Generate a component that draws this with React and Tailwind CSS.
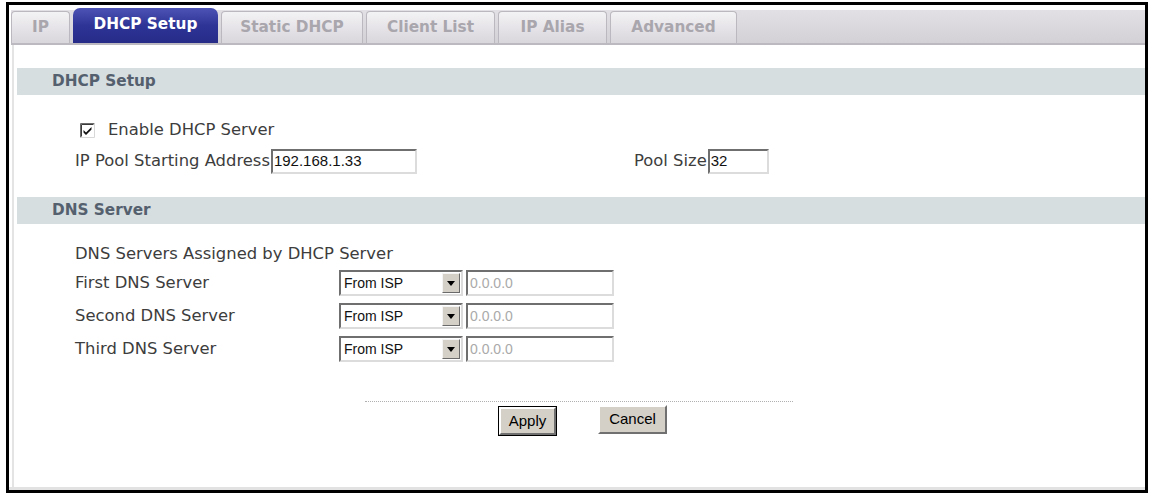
import React from 'react';

const tabs = [
    { label: 'IP', width: 'w-[59px]' },
    { label: 'DHCP Setup', width: 'w-[145px]', active: true },
    { label: 'Static DHCP', width: 'w-[142px]' },
    { label: 'Client List', width: 'w-[129px]' },
    { label: 'IP Alias', width: 'w-[109px]' },
    { label: 'Advanced', width: 'w-[127px]' },
];

const dnsRows = ['First DNS Server', 'Second DNS Server', 'Third DNS Server'];

function SectionHeader({ children }) {
    return (
        <div className="ml-[3px] flex h-[27px] items-center bg-[#d6dee0] pl-[35px] text-[15.3px] font-bold text-[#55606e]">
            {children}
        </div>
    );
}

function Sunken({ className = '', children }) {
    return (
        <div
            className={`flex items-center border-2 border-t-[#6f6f6f] border-l-[#6f6f6f] border-r-[#dcdcdc] border-b-[#dcdcdc] bg-white font-['Liberation_Sans',Arial,sans-serif] ${className}`}
        >
            {children}
        </div>
    );
}

function Select() {
    return (
        <Sunken className="h-[26px] w-[124px] justify-between pr-[1px] text-[14px] text-[#111]">
            <span className="pl-[3px]">From ISP</span>
            <div className="flex h-[20px] w-[18px] items-center justify-center border border-t-[#f4f4f4] border-l-[#f4f4f4] border-r-[#6a6a6a] border-b-[#6a6a6a] bg-[#d4d0c8]">
                <svg width="8" height="5" viewBox="0 0 8 5">
                    <path d="M0 0h8L4 5z" fill="#000" />
                </svg>
            </div>
        </Sunken>
    );
}

export default function App() {
    return (
        <div className="h-[495px] w-[1151px] bg-white pl-[6px] pt-[2px] font-['DejaVu_Sans',Verdana,sans-serif] text-[16.4px] text-[#3d3d3d]">
            <div className="flex h-[491px] w-[1142px] flex-col border-[3px] border-black">
                <div className="flex flex-1 flex-col border-b-[3px] border-b-[#e2e2e2] pt-[5px]">
                    {/* tab strip */}
                    <div className="ml-[2px] flex h-[35px] items-end gap-[3px] border-b-2 border-[#bdb9c0] bg-gradient-to-b from-[#e2e0e4] to-[#d4d1d6]">
                        {tabs.map((tab) =>
                            tab.active ? (
                                <div
                                    key={tab.label}
                                    className={`${tab.width} flex h-[35px] items-center justify-center rounded-t-[7px] bg-gradient-to-b from-[#4d53b4] via-[#2e3496] to-[#262b88] pb-[2px] text-[15.3px] font-bold text-white`}
                                >
                                    {tab.label}
                                </div>
                            ) : (
                                <div
                                    key={tab.label}
                                    className={`${tab.width} flex h-[32px] items-center justify-center rounded-t-[4px] border-x border-t border-[#bcb8bf] bg-gradient-to-b from-[#f3f2f4] to-[#d9d6dc] text-[15.3px] font-bold text-[#a9a6ad]`}
                                >
                                    {tab.label}
                                </div>
                            )
                        )}
                    </div>

                    <div className="ml-[3px] flex flex-1 flex-col border-l-2 border-[#e4e4e4]">
                        <div className="mt-[23px]">
                            <SectionHeader>DHCP Setup</SectionHeader>
                        </div>

                        <div className="ml-[66px] mt-[24px] flex h-[22px] items-center gap-[13px]">
                            <svg width="15" height="15" viewBox="0 0 15 15">
                                <rect x="0" y="0" width="15" height="15" fill="#fff" />
                                <path d="M0.5 14.5V0.5h14" fill="none" stroke="#6c6c6c" />
                                <path d="M1.5 13.5V1.5h12" fill="none" stroke="#3a3a3a" />
                                <path d="M14.5 0.5v14H0.5" fill="none" stroke="#d8d8d8" />
                                <path d="M3.5 7l2.5 2.5L11.5 4v2.6L6 12 3.5 9.5z" fill="#111" />
                            </svg>
                            <span>Enable DHCP Server</span>
                        </div>

                        <div className="ml-[61px] mt-[8px] flex h-[25px] items-center">
                            <div className="flex w-[559px] items-center">
                                <span>IP Pool Starting Address</span>
                                <Sunken className="ml-[1px] h-[25px] w-[146px] pl-[1px] text-[15px] text-[#111]">192.168.1.33</Sunken>
                            </div>
                            <span>Pool Size</span>
                            <Sunken className="ml-[1px] h-[25px] w-[61px] pl-[1px] text-[15px] text-[#111]">32</Sunken>
                        </div>

                        <div className="mt-[23px]">
                            <SectionHeader>DNS Server</SectionHeader>
                        </div>

                        <div className="ml-[61px] mt-[20px] flex h-[20px] items-center">DNS Servers Assigned by DHCP Server</div>

                        <div className="ml-[61px] mt-[6px] flex flex-col gap-[7px]">
                            {dnsRows.map((label) => (
                                <div key={label} className="flex h-[26px] items-center">
                                    <span className="w-[264px]">{label}</span>
                                    <Select />
                                    <Sunken className="ml-[3px] h-[26px] w-[148px] pl-[2px] text-[14px] text-[#aaa]">0.0.0.0</Sunken>
                                </div>
                            ))}
                        </div>

                        <div className="ml-[351px] mt-[39px] w-[428px] border-t border-dotted border-[#b0b0b0]" />

                        <div className="ml-[484px] mt-[4px] flex items-start gap-[41px] font-['Liberation_Sans',Arial,sans-serif] text-[15px] text-black">
                            <div className="border border-black">
                                <div className="flex h-[28px] w-[57px] items-center justify-center border-2 border-t-white border-l-white border-r-[#707070] border-b-[#707070] bg-[#d4d0c8]">
                                    Apply
                                </div>
                            </div>
                            <div className="-mt-[1px] flex h-[29px] w-[69px] items-center justify-center border-2 border-t-white border-l-white border-r-[#707070] border-b-[#707070] bg-[#d4d0c8]">
                                Cancel
                            </div>
                        </div>
                    </div>
                </div>
            </div>
        </div>
    );
}
